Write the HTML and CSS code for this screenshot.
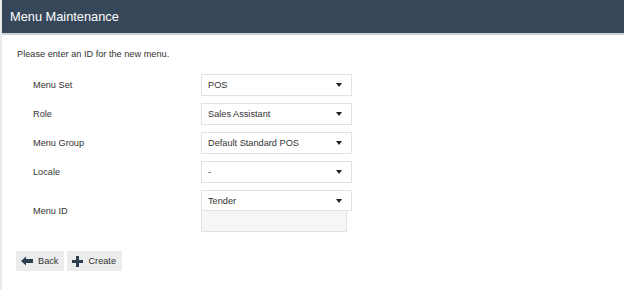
FILE: index.html
```html
<!DOCTYPE html>
<html lang="en">
<head>
    <meta charset="UTF-8">
    <title>Menu Maintenance</title>
    <link rel="stylesheet" href="styles.css">
</head>
<body>
    <div class="page">
        <div class="header">Menu Maintenance</div>

        <div class="content">
            <p class="intro">Please enter an ID for the new menu.</p>

            <div class="form">
                <div class="row">
                    <label>Menu Set</label>
                    <div class="select"><span>POS</span><i class="caret"></i></div>
                </div>
                <div class="row">
                    <label>Role</label>
                    <div class="select"><span>Sales Assistant</span><i class="caret"></i></div>
                </div>
                <div class="row">
                    <label>Menu Group</label>
                    <div class="select"><span>Default Standard POS</span><i class="caret"></i></div>
                </div>
                <div class="row">
                    <label>Locale</label>
                    <div class="select"><span>-</span><i class="caret"></i></div>
                </div>
                <div class="row row-id">
                    <label>Menu ID</label>
                    <div class="combo">
                        <div class="select"><span>Tender</span><i class="caret"></i></div>
                        <div class="id-input"></div>
                    </div>
                </div>
            </div>

            <div class="buttons">
                <button class="btn">
                    <svg width="12" height="10" viewBox="0 0 12 10"><path d="M0 5 L5 0.5 L5 3 L12 3 L12 7 L5 7 L5 9.5 Z" fill="#2c3e50"/></svg>
                    Back
                </button>
                <button class="btn">
                    <svg width="11" height="11" viewBox="0 0 11 11"><path d="M4 0 H7 V4 H11 V7 H7 V11 H4 V7 H0 V4 H4 Z" fill="#2c3e50"/></svg>
                    Create
                </button>
            </div>
        </div>
    </div>
</body>
</html>
```

FILE: styles.css
```css
* {
    margin: 0;
    padding: 0;
    box-sizing: border-box;
}

body {
    background: #fff;
    font-family: 'Liberation Sans', Arial, sans-serif;
    font-size: 9.2px;
    color: #333;
}

.page {
    width: 624px;
    height: 290px;
    border-left: 2px solid #eaeaea;
}

.header {
    height: 35px;
    background: #37475a;
    border-bottom: 2px solid #c9d0da;
    color: #fff;
    font-size: 12.8px;
    padding: 9px 0 0 8px;
}

.content {
    padding: 13px 0 0 15px;
}

.intro {
    line-height: 12px;
}

.form {
    margin-top: 14px;
    padding-left: 16px;
}

.row {
    display: flex;
    align-items: center;
    margin-bottom: 7px;
}

.row label {
    width: 168px;
}

.select {
    width: 151px;
    height: 22px;
    border: 1px solid #e2e2e2;
    background: #fff;
    display: flex;
    align-items: center;
    justify-content: space-between;
    padding: 0 6px 0 6px;
}

.caret {
    width: 0;
    height: 0;
    border-left: 3.5px solid transparent;
    border-right: 3.5px solid transparent;
    border-top: 4px solid #222;
    margin-right: 3px;
}

.row-id {
    margin-top: 1px;
}

.combo .select {
    height: 21px;
}

.id-input {
    width: 146px;
    height: 21px;
    border: 1px solid #e2e2e2;
    border-top: none;
    background: #f6f6f6;
}

.buttons {
    display: flex;
    gap: 3px;
    margin-top: 19px;
    margin-left: -1px;
}

.btn {
    height: 20px;
    border: none;
    background: #ececec;
    font-family: 'Liberation Sans', Arial, sans-serif;
    font-size: 9.2px;
    color: #333;
    display: flex;
    align-items: center;
    gap: 5px;
    padding: 0 6px 0 5px;
}
```
